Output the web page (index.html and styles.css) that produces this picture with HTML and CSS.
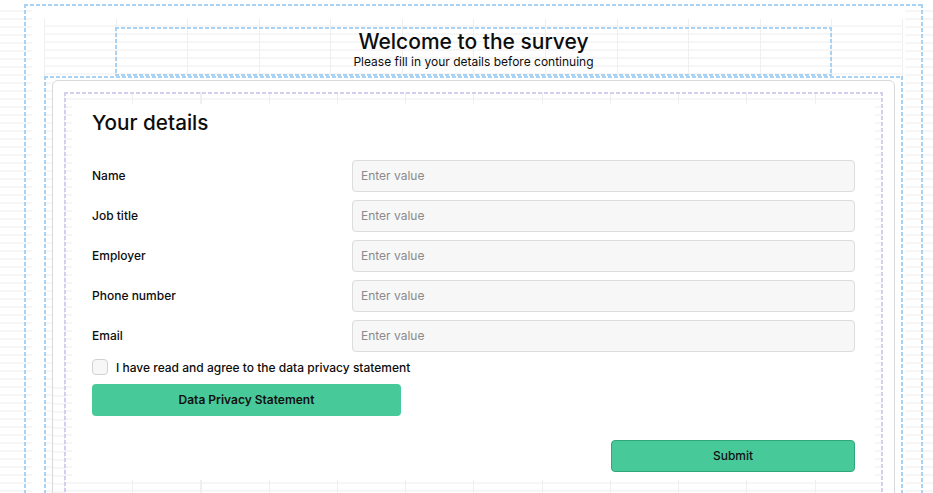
FILE: index.html
```html
<!DOCTYPE html>
<html>
<head>
<meta charset="utf-8">
<link rel="stylesheet" href="styles.css">
</head>
<body>
<div class="page">
  <div class="outer">
    <div class="grid">
      <div class="header">
        <h1 class="title">Welcome to the survey</h1>
        <p class="subtitle">Please fill in your details before continuing</p>
      </div>
    </div>
    <div class="frame">
      <div class="card">
        <div class="inner">
          <div class="content">
            <h2 class="section">Your details</h2>
            <div class="rows">
              <div class="row"><label class="label">Name</label><input class="input" placeholder="Enter value"></div>
              <div class="row"><label class="label">Job title</label><input class="input" placeholder="Enter value"></div>
              <div class="row"><label class="label">Employer</label><input class="input" placeholder="Enter value"></div>
              <div class="row"><label class="label">Phone number</label><input class="input" placeholder="Enter value"></div>
              <div class="row"><label class="label">Email</label><input class="input" placeholder="Enter value"></div>
            </div>
            <div class="check">
              <span class="box"></span>
              <span class="check-text">I have read and agree to the data privacy statement</span>
            </div>
            <button class="btn privacy">Data Privacy Statement</button>
            <div class="submit-row"><button class="btn submit">Submit</button></div>
          </div>
        </div>
      </div>
    </div>
  </div>
</div>
</body>
</html>
```
FILE: styles.css
```css
:root {
  --stripes: repeating-linear-gradient(180deg, transparent 0 6px, #f6f6f6 6px 8px);
  --cols-a: repeating-linear-gradient(90deg, #efefef 0 1px, transparent 1px 71.58px);
  --cols-b: repeating-linear-gradient(90deg, #efefef 0 1px, transparent 1px 68.25px);
  --blue-h: repeating-linear-gradient(90deg, #a9d2f3 0 4px, transparent 4px 6px);
  --blue-v: repeating-linear-gradient(180deg, #a9d2f3 0 4px, transparent 4px 6px);
  --pur-h: repeating-linear-gradient(90deg, #d4cfee 0 4px, transparent 4px 6px);
  --pur-v: repeating-linear-gradient(180deg, #d4cfee 0 4px, transparent 4px 6px);
}

* { box-sizing: border-box; }

html, body {
  margin: 0;
  padding: 0;
  background: #ffffff;
  overflow: hidden;
}

body {
  font-family: Inter, "Noto Sans", "Liberation Sans", sans-serif;
  color: #0d0d0d;
}

.page {
  width: 933px;
  height: 493px;
  overflow: hidden;
  padding: 4px 0 0 24px;
  background:
    var(--stripes) 0 4px / 32px 100% no-repeat,
    var(--stripes) 905px 4px / 28px 100% no-repeat;
}

.outer {
  width: 899px;
  height: 600px;
  padding: 15px 20px 0 20px;
  background:
    var(--blue-h) 0 0 / 100% 2px no-repeat,
    var(--blue-v) 0 0 / 2px 100% no-repeat,
    var(--blue-v) 100% 0 / 2px 100% no-repeat;
}

.grid {
  width: 859px;
  height: 57px;
  padding: 8px 0 0 71px;
  background: var(--cols-a), var(--stripes);
  border-right: 1px solid #efefef;
}

.header {
  width: 717px;
  height: 49px;
  display: flex;
  flex-direction: column;
  align-items: center;
  padding-top: 2px;
  background:
    var(--blue-h) 0 0 / 100% 2px no-repeat,
    var(--blue-h) 0 100% / 100% 2px no-repeat,
    var(--blue-v) 0 0 / 2px 100% no-repeat,
    var(--blue-v) 100% 0 / 2px 100% no-repeat;
}

.title {
  margin: 0;
  font-size: 21px;
  line-height: 25px;
  font-weight: 500;
}

.subtitle {
  margin: 0;
  font-size: 12px;
  line-height: 16px;
  font-weight: 400;
}

.frame {
  width: 859px;
  height: 500px;
  padding: 4px 8px 0 8px;
  background:
    var(--blue-h) 0 0 / 100% 2px no-repeat,
    var(--blue-v) 0 0 / 2px 100% no-repeat,
    var(--blue-v) 100% 0 / 2px 100% no-repeat,
    var(--stripes) 1px 0 / 8px 100% no-repeat;
}

.card {
  width: 843px;
  height: 480px;
  border: 1px solid #d9d9d9;
  border-radius: 6px;
  padding: 11px 11px 0 11px;
  background:
    var(--stripes) 0 300px / 12px 100% no-repeat,
    #ffffff;
}

.inner {
  width: 819px;
  height: 470px;
  padding: 12px 8px 0 8px;
  background:
    var(--pur-h) 0 0 / 100% 2px no-repeat,
    var(--pur-v) 0 0 / 2px 100% no-repeat,
    var(--pur-v) 100% 0 / 2px 100% no-repeat,
    var(--cols-b),
    var(--stripes);
}

.content {
  width: 803px;
  background: #ffffff;
  padding: 5px 20px 8px 20px;
  display: flex;
  flex-direction: column;
}

.section {
  margin: 0;
  font-size: 20.7px;
  line-height: 28px;
  font-weight: 500;
}

.rows {
  margin-top: 23px;
  display: flex;
  flex-direction: column;
  gap: 8px;
}

.row {
  display: flex;
  align-items: center;
  height: 32px;
}

.label {
  width: 260px;
  font-size: 12px;
  line-height: 14px;
  padding-bottom: 1px;
  font-weight: 500;
}

.input {
  flex: 1;
  height: 32px;
  border: 1px solid #dcdcdc;
  border-radius: 4px;
  background: #f7f7f7;
  padding: 0 8px 1px 8px;
  font-family: inherit;
  font-size: 12px;
  color: #0d0d0d;
  outline: none;
}

.input::placeholder {
  color: #8b8b8b;
}

.check {
  margin-top: 7px;
  display: flex;
  align-items: center;
  gap: 8px;
  height: 16px;
}

.box {
  width: 16px;
  height: 16px;
  border: 1px solid #d2d2d2;
  border-radius: 4px;
  background: #f7f7f7;
}

.check-text {
  font-size: 12px;
  font-weight: 500;
}

.btn {
  height: 32px;
  border-radius: 4px;
  background: #48c99a;
  font-family: inherit;
  font-size: 12px;
  color: #111;
  cursor: pointer;
  padding: 0 0 1px 0;
}

.privacy {
  margin-top: 9px;
  width: 309px;
  border: none;
  font-weight: 600;
}

.submit-row {
  margin-top: 24px;
  display: flex;
  justify-content: flex-end;
}

.submit {
  width: 244px;
  border: 1px solid #2ea77a;
  font-weight: 500;
}
```
